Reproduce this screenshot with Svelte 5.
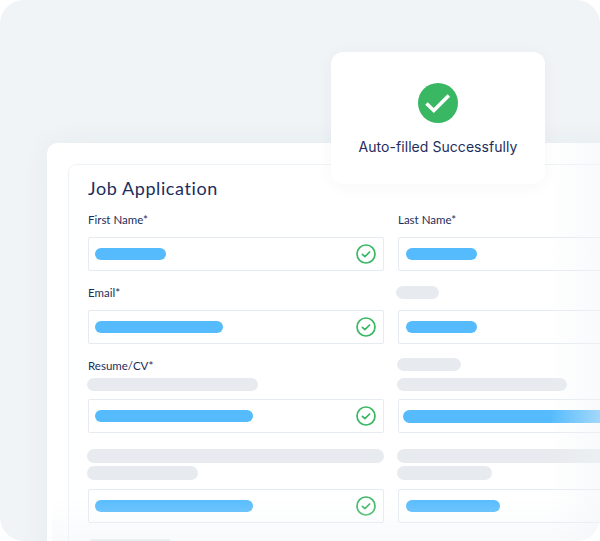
<script>
  const rows = [
    {
      left: { label: 'First Name*', bar: 71 },
      right: { label: 'Last Name*', bar: 71 }
    },
    {
      left: { label: 'Email*', bar: 128 },
      right: { skeletons: [43], kind: 'single', bar: 71 }
    },
    {
      left: { label: 'Resume/CV*', skeletons: [171], bar: 158 },
      right: { skeletons: [64, 170], kind: 'loose', fill: true }
    },
    {
      left: { skeletons: [297, 111], kind: 'tall', bar: 158 },
      right: { skeletons: [220, 95], kind: 'tall', bar: 94 }
    }
  ];
</script>

{#snippet tick()}
  <svg class="tick" viewBox="0 0 20 20" width="20" height="20" aria-hidden="true">
    <circle cx="10" cy="10" r="9" fill="none" stroke="#39b763" stroke-width="1.7" />
    <path d="M6.4 10.3l2.5 2.4 4.7-4.7" fill="none" stroke="#39b763" stroke-width="1.7" stroke-linecap="round" stroke-linejoin="round" />
  </svg>
{/snippet}

{#snippet cell(data, checked)}
  <div class="cell" class:side={!checked}>
    {#if data.label}
      <div class="label">{data.label}</div>
    {/if}
    {#if data.skeletons}
      <div class="skeletons {data.kind ?? ''}">
        {#each data.skeletons as w}
          <span class="skeleton" style="width: {w}px"></span>
        {/each}
      </div>
    {/if}
    <div class="field" class:filled={data.fill}>
      {#if data.fill}
        <span class="bar wide"></span>
      {:else}
        <span class="bar" style="width: {data.bar}px"></span>
      {/if}
      {#if checked}
        {@render tick()}
      {/if}
    </div>
  </div>
{/snippet}

<div class="panel">
  <div class="card">
    <div class="inner">
      <h1>Job Application</h1>
      <div class="grid">
        {#each rows as row}
          {@render cell(row.left, true)}
          {@render cell(row.right, false)}
        {/each}
      </div>
      <span class="cut"></span>
    </div>
  </div>

  <div class="fade-right"></div>
  <div class="fade-bottom"></div>

  <div class="toast">
    <svg viewBox="0 0 40 40" width="40" height="40" aria-hidden="true">
      <circle cx="20" cy="20" r="20" fill="#39b763" />
      <path d="M8.5 20.5l7.3 7 15-15" fill="none" stroke="#fff" stroke-width="3.6" />
    </svg>
    <p>Auto-filled Successfully</p>
  </div>
</div>

<style>
  :global(body) {
    background: #fff;
  }

  .panel {
    position: relative;
    width: 600px;
    height: 541px;
    padding: 143px 0 0 47px;
    box-sizing: border-box;
    overflow: hidden;
    background: #f0f4f7;
    border-radius: 24px;
    font-family: Lato, "Noto Sans", sans-serif;
    color: #1c2e5c;
  }

  .card {
    width: 640px;
    height: 420px;
    padding: 21px 0 0 21px;
    box-sizing: border-box;
    background: #fff;
    border-radius: 10px 0 0 0;
    box-shadow: 0 0 30px rgba(30, 50, 80, 0.05);
  }

  .inner {
    height: 400px;
    padding: 11px 0 0 19px;
    box-sizing: border-box;
    border: 1px solid #eef3f8;
    border-radius: 8px 0 0 0;
  }

  h1 {
    margin: 0 0 13px;
    font-size: 18px;
    line-height: 24px;
    font-weight: 400;
    letter-spacing: 0.6px;
  }

  .grid {
    display: grid;
    grid-template-columns: 296px 260px;
    column-gap: 14px;
    row-gap: 15px;
  }

  .cell {
    display: flex;
    flex-direction: column;
    justify-content: flex-end;
    min-width: 0;
  }

  .label {
    height: 14px;
    margin-bottom: 10px;
    font-size: 11.5px;
    line-height: 14px;
    white-space: nowrap;
  }

  .skeletons {
    display: flex;
    flex-direction: column;
    gap: 5px;
    margin: 0 0 8px -1px;
  }

  .label + .skeletons {
    margin-top: -5px;
  }

  .skeletons.single {
    margin-bottom: 11px;
    margin-left: -2px;
  }

  .skeletons.loose {
    gap: 7px;
    margin-top: -1px;
  }

  .skeletons.tall {
    gap: 3px;
    margin-top: 1px;
    margin-bottom: 9px;
  }

  .skeleton {
    display: block;
    height: 13px;
    border-radius: 7px;
    background: #e7ebef;
  }

  .tall .skeleton {
    height: 14px;
  }

  .field {
    display: flex;
    align-items: center;
    justify-content: space-between;
    height: 34px;
    padding: 0 7px 0 6px;
    box-sizing: border-box;
    border: 1px solid #e6ebf1;
    border-radius: 2px;
    background: #fff;
    flex-shrink: 0;
  }

  .side .field {
    padding-left: 7px;
  }

  .side .field.filled {
    padding-left: 4px;
    padding-right: 0;
  }

  .bar {
    display: block;
    height: 12px;
    border-radius: 6px;
    background: #55bbfd;
  }

  .bar.wide {
    width: 100%;
    height: 13px;
    background: linear-gradient(90deg, #55bbfd 0 82%, #8fd2fd 96%);
    border-radius: 7px 0 0 7px;
  }

  .cut {
    display: block;
    width: 80px;
    height: 2px;
    margin: 16px 0 0 2px;
    background: #e7ebef;
  }

  .fade-right {
    position: absolute;
    top: 143px;
    right: 0;
    bottom: 0;
    width: 50px;
    background: linear-gradient(90deg, rgba(240, 244, 247, 0), rgba(240, 244, 247, 0.5));
    pointer-events: none;
  }

  .fade-bottom {
    position: absolute;
    left: 52px;
    right: 0;
    bottom: 0;
    height: 44px;
    background: linear-gradient(180deg, rgba(240, 244, 247, 0), rgba(240, 244, 247, 0.45));
    pointer-events: none;
  }

  .toast {
    position: absolute;
    top: 52px;
    left: 331px;
    display: flex;
    flex-direction: column;
    align-items: center;
    width: 214px;
    height: 132px;
    padding-top: 31px;
    box-sizing: border-box;
    background: #fff;
    border-radius: 12px;
    box-shadow: 0 2px 18px rgba(30, 50, 80, 0.04);
  }

  .toast p {
    margin: 14px 0 0;
    font-family: Inter, sans-serif;
    font-size: 14px;
    line-height: 20px;
    font-weight: 400;
    letter-spacing: 0.05px;
    white-space: nowrap;
  }

  .tick {
    flex-shrink: 0;
  }
</style>
